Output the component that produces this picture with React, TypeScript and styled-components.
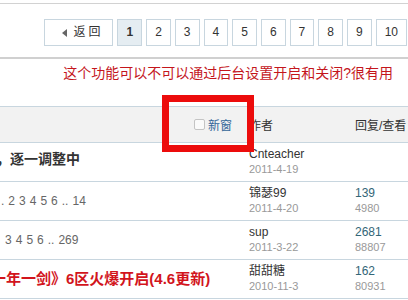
import * as React from "react";
import styled, { createGlobalStyle } from "styled-components";

const GlobalStyle = createGlobalStyle`
  html, body {
    margin: 0;
    padding: 0;
    background: #fff;
  }
  body {
    width: 408px;
    height: 300px;
    overflow: hidden;
    font: 12px "Liberation Sans", "Noto Sans CJK SC", sans-serif;
    color: #333;
  }
`;

interface IThread {
  id: number;
  title?: string;
  red?: boolean;
  lead?: string;
  pages?: string[];
  last?: string;
  author: string;
  date: string;
  replies?: string;
  views?: string;
}

const threads: IThread[] = [
  { id: 1, title: "，逐一调整中", author: "Cnteacher", date: "2011-4-19" },
  {
    id: 2,
    lead: ".",
    pages: ["2", "3", "4", "5", "6"],
    last: "14",
    author: "锦瑟99",
    date: "2011-4-20",
    replies: "139",
    views: "4980"
  },
  {
    id: 3,
    pages: ["3", "4", "5", "6"],
    last: "269",
    author: "sup",
    date: "2011-3-22",
    replies: "2681",
    views: "88807"
  },
  {
    id: 4,
    title: "十年一剑》6区火爆开启(4.6更新)",
    red: true,
    author: "甜甜糖",
    date: "2010-11-3",
    replies: "162",
    views: "80931"
  }
];

const pageNumbers = ["1", "2", "3", "4", "5", "6", "7", "8", "9", "10"];

export default function App() {
  return (
    <Page>
      <GlobalStyle />
      <TopRule />
      <PagerBar>
        <BackLink>
          <Arrow />
          返回
        </BackLink>
        {pageNumbers.map(n => (
          <PageLink key={n} $active={n === "1"}>
            {n}
          </PageLink>
        ))}
      </PagerBar>
      <Note>这个功能可以不可以通过后台设置开启和关闭?很有用</Note>

      <Table>
        <HeadRow>
          <HeadTitle>
            <Check />
            <NewWin>新窗</NewWin>
          </HeadTitle>
          <HeadCell>作者</HeadCell>
          <HeadCell>回复/查看</HeadCell>
        </HeadRow>
        {threads.map(t => (
          <Row key={t.id}>
            <TitleCell>
              {t.title && <Title $red={t.red}>{t.title}</Title>}
              {t.pages && (
                <Pages $indent={t.lead ? 1 : 1}>
                  {t.lead}
                  {t.pages.map(p => (
                    <PageNum key={p}>{p}</PageNum>
                  ))}
                  <PageNum>..</PageNum>
                  <PageNum>{t.last}</PageNum>
                </Pages>
              )}
            </TitleCell>
            <Stack>
              <Name>{t.author}</Name>
              <Sub>{t.date}</Sub>
            </Stack>
            <Stack>
              {t.replies && <Count>{t.replies}</Count>}
              {t.views && <Sub>{t.views}</Sub>}
            </Stack>
          </Row>
        ))}
      </Table>

      <Marker />
    </Page>
  );
}

const Page = styled.div`
  position: relative;
  padding-top: 3px;
`;

const TopRule = styled.div`
  border-top: 1px solid #d2d2d2;
`;

const PagerBar = styled.div`
  display: flex;
  justify-content: flex-end;
  gap: 4px;
  padding: 15px 1px 11px 0;
  border-bottom: 2px solid #d0d0d0;
`;

const PageLink = styled.a<{ $active?: boolean }>`
  box-sizing: border-box;
  height: 27px;
  line-height: 25px;
  padding: 0 8px;
  border: 1px solid #c8d6df;
  background: ${p => (p.$active ? "#e5edf2" : "#fff")};
  font-weight: ${p => (p.$active ? "bold" : "normal")};
  color: #333;
  font-size: 12px;
`;

const BackLink = styled(PageLink)`
  display: flex;
  align-items: center;
  padding: 0 9px 0 17px;
  letter-spacing: 3px;
`;

const Arrow = styled.span`
  width: 0;
  height: 0;
  border-top: 4px solid transparent;
  border-bottom: 4px solid transparent;
  border-right: 5px solid #666;
  margin-right: 6px;
`;

const Note = styled.div`
  margin-top: 4px;
  padding-right: 15px;
  line-height: 20px;
  text-align: right;
  font-size: 14px;
  color: #c4161c;
`;

const Table = styled.div`
  margin-top: 23px;
`;

const HeadRow = styled.div`
  box-sizing: border-box;
  height: 37px;
  display: grid;
  grid-template-columns: 1fr 106px 53px;
  align-items: center;
  background: #f2f2f2;
  border-top: 1px solid #c8d6df;
  border-bottom: 1px solid #c8d6df;
`;

const HeadTitle = styled.div`
  display: flex;
  align-items: center;
  justify-content: flex-end;
  padding-right: 17px;
`;

const Check = styled.span`
  box-sizing: border-box;
  width: 11px;
  height: 11px;
  border: 1px solid #c4c4c4;
  border-radius: 2px;
  background: #fafafa;
  margin-right: 3px;
`;

const NewWin = styled.span`
  color: #336699;
`;

const HeadCell = styled.div`
  color: #333;
  white-space: nowrap;
`;

const Row = styled.div`
  box-sizing: border-box;
  height: 39px;
  display: grid;
  grid-template-columns: 1fr 106px 53px;
  align-items: center;
  border-bottom: 1px solid #c8d6df;
`;

const TitleCell = styled.div`
  overflow: hidden;
  white-space: nowrap;
`;

const Title = styled.span<{ $red?: boolean }>`
  display: inline-block;
  margin: ${p => (p.$red ? "0 0 4px -9px" : "0 0 8px -4px")};
  font-size: ${p => (p.$red ? "15px" : "14px")};
  font-weight: bold;
  color: ${p => (p.$red ? "#d2141c" : "#333")};
`;

const Pages = styled.span<{ $indent: number }>`
  display: inline-block;
  padding-left: ${p => p.$indent}px;
  color: #666;
  font-size: 12px;
`;

const PageNum = styled.span`
  margin-left: 4px;
`;

const Stack = styled.div`
  display: flex;
  flex-direction: column;
  line-height: 15px;
  white-space: nowrap;
`;

const Name = styled.span`
  font-size: 12px;
  color: #333;
`;

const Count = styled.span`
  font-size: 12px;
  color: #336677;
`;

const Sub = styled.span`
  font-size: 11px;
  color: #999;
`;

const Marker = styled.div`
  position: absolute;
  left: 162px;
  top: 95px;
  width: 92px;
  height: 57px;
  box-sizing: border-box;
  border: 7px solid #ec0c0c;
`;
